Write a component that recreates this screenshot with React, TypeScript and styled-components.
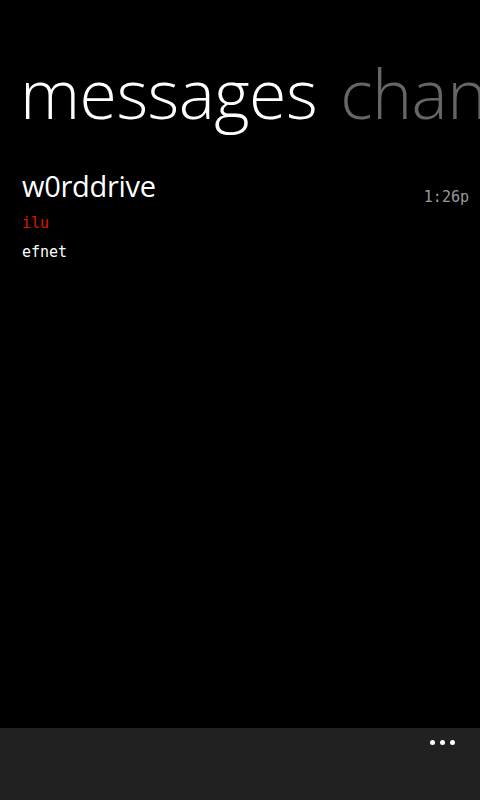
import React from 'react'
import styled, { createGlobalStyle } from 'styled-components'

const Global = createGlobalStyle`
  html, body {
    margin: 0;
    padding: 0;
    background: #000;
  }
  #root {
    height: 800px;
  }
`

const Screen = styled.div`
  width: 480px;
  height: 800px;
  background: #000;
  display: flex;
  flex-direction: column;
  overflow: hidden;
  font-family: "Open Sans", "Noto Sans", sans-serif;
`

const Content = styled.div`
  flex: 1;
  display: flex;
  flex-direction: column;
`

const Pivot = styled.div`
  display: flex;
  white-space: nowrap;
  gap: 23px;
  padding: 45px 0 0 20px;
  font-weight: 300;
  font-size: 68px;
  line-height: 96px;
  letter-spacing: -0.5px;
`

const PivotItem = styled.span<{ $active?: boolean }>`
  color: ${p => (p.$active ? '#fff' : '#666')};
`

const List = styled.div`
  display: flex;
  flex-direction: column;
  padding: 25px 11px 0 22px;
`

const Row = styled.div`
  display: flex;
  justify-content: space-between;
  align-items: flex-start;
`

const Info = styled.div`
  display: flex;
  flex-direction: column;
`

const Name = styled.div`
  color: #fff;
  font-size: 29px;
  font-weight: 400;
  line-height: 40px;
  letter-spacing: -0.3px;
  margin-bottom: 3px;
`

const Line = styled.div<{ $color: string }>`
  color: ${p => p.$color};
  font-family: "DejaVu Sans Mono", monospace;
  font-size: 15px;
  line-height: 29px;
`

const Time = styled.div`
  color: #9a9a9a;
  font-family: "DejaVu Sans Mono", monospace;
  font-size: 15px;
  margin-top: 22px;
`

const AppBar = styled.div`
  height: 72px;
  background: #212121;
  display: flex;
  justify-content: flex-end;
  padding: 12px 25px 0 0;
  box-sizing: border-box;
`

const More = styled.div`
  display: flex;
  gap: 5px;
  height: 5px;
`

const Dot = styled.span`
  width: 5px;
  height: 5px;
  border-radius: 50%;
  background: #fff;
`

export default function App() {
  return (
    <>
      <Global />
      <Screen>
        <Content>
          <Pivot>
            <PivotItem $active>messages</PivotItem>
            <PivotItem>channels</PivotItem>
          </Pivot>
          <List>
            <Row>
              <Info>
                <Name>w0rddrive</Name>
                <Line $color="#e51400">ilu</Line>
                <Line $color="#fff">efnet</Line>
              </Info>
              <Time>1:26p</Time>
            </Row>
          </List>
        </Content>
        <AppBar>
          <More>
            <Dot />
            <Dot />
            <Dot />
          </More>
        </AppBar>
      </Screen>
    </>
  )
}
